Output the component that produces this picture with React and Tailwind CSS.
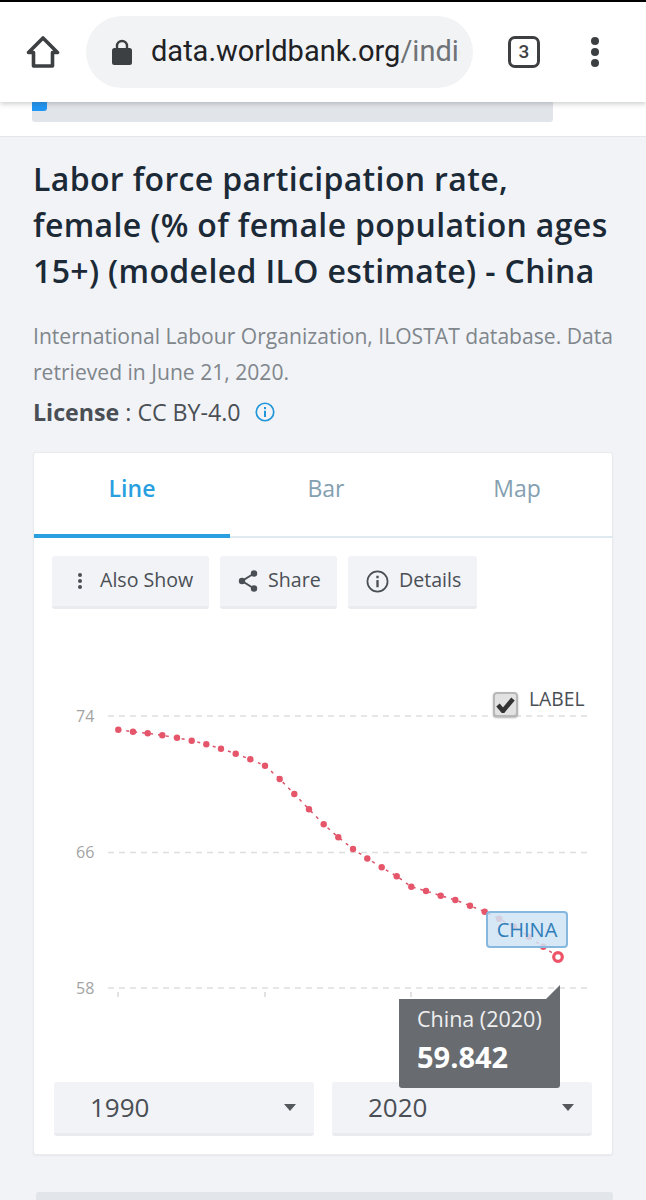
const pts = [[118.3,729.7],[133,731.7],[147.7,733.3],[162.3,735.3],[177,737.7],[191.7,740.7],[206.3,744.3],[221,748.7],[235.7,753.7],[250.3,759.3],[265,765.7],[279.7,779],[294.3,794],[309,809.3],[323.7,824.3],[338.3,837.3],[353,849],[367.3,858.5],[381.7,867.3],[396.7,876.3],[411.3,886.7],[426,891],[440.7,895.7],[455.3,900],[470,905.7],[484.7,911.7],[499.3,918.7],[514,926.7],[528.7,936.7],[543.3,946.7]];

function HomeIcon() {
  return (
    <svg width="34" height="34" viewBox="0 0 34 34" className="shrink-0" fill="none" stroke="#3c4043" strokeWidth="3.6" strokeLinejoin="round">
      <path d="M17 3 L31.5 17.5 H26.5 V31 H7.5 V17.5 H2.5 Z" />
    </svg>
  );
}

function LockIcon() {
  return (
    <svg width="20" height="26" viewBox="0 0 20 26" className="shrink-0">
      <path d="M5 10 V7 a5 5 0 0 1 10 0 V10" fill="none" stroke="#3c4043" strokeWidth="2.4" />
      <rect x="0" y="9" width="20" height="17" rx="2.5" fill="#3c4043" />
    </svg>
  );
}

function ShareIcon() {
  return (
    <svg width="20" height="24" viewBox="0 0 20 24" fill="none" className="shrink-0">
      <path d="M16 4.5 L4 12 L16 19.5" stroke="#4a4f55" strokeWidth="2" />
      <circle cx="16" cy="4.5" r="3.2" fill="#4a4f55" />
      <circle cx="4" cy="12" r="3.2" fill="#4a4f55" />
      <circle cx="16" cy="19.5" r="3.2" fill="#4a4f55" />
    </svg>
  );
}

function InfoIcon({ size, color, sw }) {
  return (
    <svg width={size} height={size} viewBox="0 0 24 24" fill="none" className="shrink-0">
      <circle cx="12" cy="12" r="10.5" stroke={color} strokeWidth={sw} />
      <rect x="10.8" y="10.5" width="2.4" height="7.5" fill={color} />
      <rect x="10.8" y="6" width="2.4" height="2.6" fill={color} />
    </svg>
  );
}

function ToolButton({ w, icon, children }) {
  return (
    <div style={{ width: w }} className="h-[53px] flex items-center rounded-[3px] bg-[#f1f3f7] border-b-[3px] border-[#e9ebef] shrink-0">
      {icon}
      <span className="pb-[2px] text-[19.6px] text-[#4a4f55] font-['Open_Sans',sans-serif]">{children}</span>
    </div>
  );
}

function YearSelect({ year }) {
  return (
    <div className="w-[260px] h-[54px] flex items-center justify-between rounded-[3px] bg-[#f1f3f7] border-b-[3px] border-[#e9ebef] pl-[36px] pr-[18px]">
      <span className="text-[26px] text-[#4a4f55] font-['Open_Sans',sans-serif]">{year}</span>
      <svg width="12" height="7" viewBox="0 0 12 7"><path d="M0 0H12L6 7Z" fill="#54585d" /></svg>
    </div>
  );
}

export default function App() {
  return (
    <div className="w-[646px] h-[1200px] overflow-hidden bg-[#f1f3f7] font-['Open_Sans',sans-serif]">
      <div className="h-[2px] bg-black" />
      <header className="relative z-10 h-[100px] bg-white flex items-center shadow-[0_2px_5px_rgba(60,64,67,0.25)] pl-[26px]">
        <HomeIcon />
        <div className="ml-[26px] w-[387px] h-[72px] rounded-full bg-[#f1f3f4] flex items-center pl-[26px] overflow-hidden">
          <LockIcon />
          <div className="ml-[19px] w-[309px] overflow-hidden whitespace-nowrap font-['Roboto',sans-serif] text-[29px] text-[#202124]">
            data.worldbank.org<span className="text-[#6f7377]">/indic</span>
          </div>
        </div>
        <div className="ml-[35px] w-[32px] h-[32px] rounded-[7px] border-[3px] border-[#3c4043] flex items-center justify-center font-['Roboto',sans-serif] font-medium text-[19px] text-[#3c4043]">3</div>
        <div className="ml-[51px] flex flex-col gap-[3px]">
          <div className="w-[8px] h-[8px] rounded-full bg-[#3c4043]" />
          <div className="w-[8px] h-[8px] rounded-full bg-[#3c4043]" />
          <div className="w-[8px] h-[8px] rounded-full bg-[#3c4043]" />
        </div>
      </header>

      <div className="h-[35px] bg-white border-b border-[#e4e6ea] pl-[32px]">
        <div className="w-[521px] h-[20px] bg-[#e1e4e9] rounded-b-[3px]">
          <div className="w-[15px] h-[9px] bg-[#2196f3] rounded-br-[3px]" />
        </div>
      </div>

      <main className="px-[33px]">
        <h1 className="mt-[19px] text-[32px] leading-[46px] font-semibold tracking-[0.35px] text-[#1b2a36] whitespace-nowrap">
          Labor force participation rate,<br />
          female (% of female population ages<br />
          15+) (modeled ILO estimate) - China
        </h1>
        <p className="mt-[24px] text-[21.1px] leading-[36px] text-[#80868b] whitespace-nowrap">
          International Labour Organization, ILOSTAT database. Data<br />
          retrieved in June 21, 2020.
        </p>
        <div className="mt-[4px] h-[36px] flex items-center text-[23.2px] text-[#4a4f55]">
          <span className="font-bold">License</span>
          <span className="ml-[6px]">: CC BY-4.0</span>
          <span className="ml-[14px]"><InfoIcon size={20} color="#2196d8" sw={2} /></span>
        </div>

        <section className="mt-[22px] w-[580px] h-[703px] bg-white border border-[#e8eaee] rounded-[3px] shadow-[0_1px_2px_rgba(0,0,0,0.05)]">
          <div className="flex h-[85px] border-b-2 border-[#deeaf0]">
            <div className="w-[196px] h-[85px] flex items-center justify-center border-b-[4px] border-[#2a9fe0] pb-[10px] text-[23px] font-semibold text-[#2a9fe0]">Line</div>
            <div className="w-[192px] flex items-center justify-center pb-[13px] text-[23px] text-[#84a0b0]">Bar</div>
            <div className="w-[190px] flex items-center justify-center pb-[13px] text-[23px] text-[#84a0b0]">Map</div>
          </div>

          <div className="flex gap-[11px] pl-[18px] pt-[18px]">
            <ToolButton w={157} icon={
              <svg width="6" height="18" viewBox="0 0 6 18" className="ml-[25px] mr-[17px] shrink-0">
                <circle cx="3" cy="3" r="2" fill="#4a4f55" /><circle cx="3" cy="9" r="2" fill="#4a4f55" /><circle cx="3" cy="15" r="2" fill="#4a4f55" />
              </svg>
            }>Also Show</ToolButton>
            <ToolButton w={117} icon={<span className="ml-[18px] mr-[10px]"><ShareIcon /></span>}>Share</ToolButton>
            <ToolButton w={129} icon={<span className="ml-[18px] mr-[10px]"><InfoIcon size={23} color="#4a4f55" sw={1.8} /></span>}>Details</ToolButton>
          </div>

          <div className="relative h-[473px]">
            <svg width="578" height="473" viewBox="34 609 578 473" className="block">
              {[716, 852.6, 988].map((y) => (
                <line key={y} x1="108" x2="588" y1={y} y2={y} stroke="#dedede" strokeWidth="1.5" strokeDasharray="6 5" />
              ))}
              {[118, 265, 411, 558].map((x) => (
                <line key={x} x1={x} x2={x} y1="992" y2="997" stroke="#c4c4c4" strokeWidth="1" />
              ))}
              <polyline points={pts.map((p) => p.join(",")).join(" ") + " 558,957"} fill="none" stroke="#d9566c" strokeWidth="1.5" strokeDasharray="3 5" />
              {pts.map((p, i) => (
                <circle key={i} cx={p[0]} cy={p[1]} r="3.2" fill="#e6566b" />
              ))}
              <circle cx="558" cy="957" r="4.3" fill="#fff" stroke="#ee5266" strokeWidth="3.2" />
            </svg>

            <span className="absolute left-[42px] top-[95px] text-[16px] leading-[24px] text-[#a3a3a3]">74</span>
            <span className="absolute left-[42px] top-[231px] text-[16px] leading-[24px] text-[#a3a3a3]">66</span>
            <span className="absolute left-[42px] top-[367px] text-[16px] leading-[24px] text-[#a3a3a3]">58</span>

            <div className="absolute left-[459px] top-[83px] w-[25px] h-[25px] rounded-[4px] bg-[#e2e2e2] border-2 border-[#b8b8b8] shadow-[0_1px_2px_rgba(0,0,0,0.3)] flex items-center justify-center">
              <svg width="19" height="17" viewBox="0 0 19 17"><path d="M2 9 L7 15 L17 3" fill="none" stroke="#333" strokeWidth="4.5" /></svg>
            </div>
            <span className="absolute left-[495px] top-[76px] text-[19.3px] leading-[28px] text-[#4a4f55]">LABEL</span>

            <div className="absolute left-[452px] top-[302px] w-[82px] h-[37px] rounded-[4px] border-2 border-[#86b8df] bg-[#cfe3f4]/85 flex items-center justify-center text-[20px] text-[#2f7db8]">CHINA</div>

            <div className="absolute z-10 left-[365px] top-[390px] w-[161px] h-[89px] bg-[#686c70] rounded-b-[3px] pl-[18px] pt-[3px] text-white">
              <svg width="14" height="14" viewBox="0 0 14 14" className="absolute right-0 -top-[14px]"><path d="M0 14 L14 0 V14Z" fill="#686c70" /></svg>
              <div className="text-[21.5px] leading-[34px] text-[#f0f0f0]">China (2020)</div>
              <div className="text-[29px] leading-[42px] font-bold">59.842</div>
            </div>
          </div>

          <div className="flex gap-[18px] pl-[20px]">
            <YearSelect year="1990" />
            <YearSelect year="2020" />
          </div>
        </section>

        <div className="mt-[37px] ml-[3px] w-[577px] h-[20px] bg-[#e2e5ea] rounded-t-[3px]" />
      </main>
    </div>
  );
}
